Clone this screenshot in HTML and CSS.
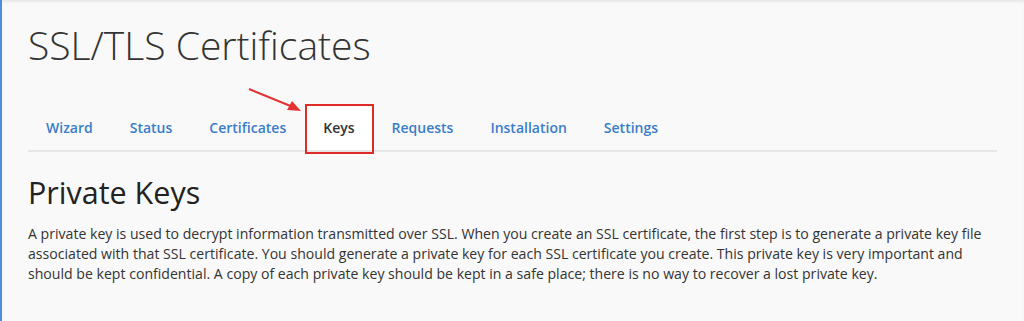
FILE: index.html
```html
<!DOCTYPE html>
<html lang="en">
<head>
    <meta charset="UTF-8">
    <title>SSL/TLS Certificates</title>
    <link rel="stylesheet" href="styles.css">
</head>
<body>
    <div class="page">
        <h1 class="page-title">SSL/TLS Certificates</h1>
        <ul class="tabs">
            <li><a href="#">Wizard</a></li>
            <li><a href="#">Status</a></li>
            <li><a href="#">Certificates</a></li>
            <li class="active">
                <svg class="pointer" width="60" height="30" viewBox="0 0 60 30">
                    <line x1="2" y1="2" x2="46" y2="20" stroke="#e53333" stroke-width="2"/>
                    <polygon points="54,24 40,23 45,14" fill="#e53333"/>
                </svg>
                <a href="#">Keys</a>
            </li>
            <li><a href="#">Requests</a></li>
            <li><a href="#">Installation</a></li>
            <li><a href="#">Settings</a></li>
        </ul>
        <h2 class="section-title">Private Keys</h2>
        <p class="desc">A private key is used to decrypt information transmitted over SSL. When you create an SSL certificate, the first step is to generate a private key file associated with that SSL certificate. You should generate a private key for each SSL certificate you create. This private key is very important and should be kept confidential. A copy of each private key should be kept in a safe place; there is no way to recover a lost private key.</p>
    </div>
</body>
</html>
```

FILE: styles.css
```css
html, body {
    height: 100%;
}

body {
    margin: 0;
    font-family: "Open Sans", sans-serif;
    background: #f9f9f9;
    border-left: 2px solid #4a8fdc;
    box-shadow: inset 0 3px 3px -1px rgba(0, 0, 0, 0.08);
    color: #333;
    overflow: hidden;
}

.page {
    width: 969px;
    padding: 20px 0 0 26px;
}

.page-title {
    margin: 0;
    font-size: 39px;
    font-weight: 300;
    color: #333;
    line-height: 50px;
}

.tabs {
    list-style: none;
    margin: 36px 0 0;
    padding: 0;
    display: flex;
    border-bottom: 2px solid #e6e6e6;
}

.tabs li {
    position: relative;
}

.tabs a {
    display: block;
    padding: 0 18px 0 18px;
    margin-right: 1px;
    line-height: 44px;
    font-size: 14px;
    font-weight: 600;
    color: #3a7dc9;
    text-decoration: none;
}

.tabs .active a {
    color: #333;
    background: #fff;
}

.tabs .active::after {
    content: "";
    position: absolute;
    left: 0;
    right: 0;
    top: -2px;
    bottom: -4px;
    border: 2px solid #e02a2a;
}

.pointer {
    position: absolute;
    left: -58px;
    top: -19px;
}

.section-title {
    margin: 20px 0 0;
    font-size: 30.5px;
    font-weight: 500;
    line-height: 40px;
    color: #222;
}

.desc {
    margin: 12px 0 0;
    font-size: 14.1px;
    line-height: 20px;
    color: #333;
}
```
